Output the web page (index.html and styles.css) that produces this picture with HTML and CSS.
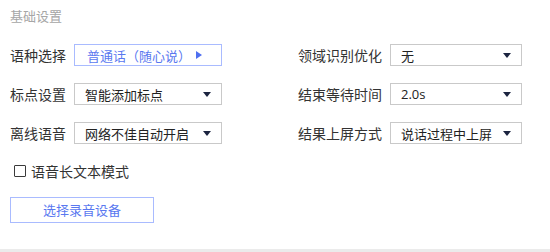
FILE: index.html
```html
<!DOCTYPE html>
<html lang="zh">
<head>
<meta charset="utf-8">
<link rel="stylesheet" href="styles.css">
</head>
<body>
<div class="panel">
  <div class="title">基础设置</div>
  <div class="grid">
    <div class="label">语种选择</div>
    <div class="select select-blue"><span>普通话（随心说）</span><i class="tri-right"></i></div>
    <div class="spacer"></div>
    <div class="label">领域识别优化</div>
    <div class="select"><span>无</span><i class="tri-down"></i></div>

    <div class="label">标点设置</div>
    <div class="select"><span>智能添加标点</span><i class="tri-down"></i></div>
    <div class="spacer"></div>
    <div class="label">结束等待时间</div>
    <div class="select"><span class="latin">2.0s</span><i class="tri-down"></i></div>

    <div class="label">离线语音</div>
    <div class="select"><span>网络不佳自动开启</span><i class="tri-down"></i></div>
    <div class="spacer"></div>
    <div class="label">结果上屏方式</div>
    <div class="select"><span>说话过程中上屏</span><i class="tri-down"></i></div>
  </div>
  <label class="check"><span class="box"></span><span>语音长文本模式</span></label>
  <div class="btn">选择录音设备</div>
</div>
<div class="bottom-line"></div>
</body>
</html>
```

FILE: styles.css
```css
html, body {
  margin: 0;
  padding: 0;
  background: #ffffff;
  width: 550px;
  height: 252px;
  overflow: hidden;
}
body {
  font-family: "Noto Sans CJK SC", "Noto Sans", sans-serif;
  color: #333333;
}
.panel {
  box-sizing: border-box;
  padding: 8px 10px 0 10px;
  height: 249px;
}
.title {
  font-size: 13px;
  line-height: 16px;
  color: #a6a6a6;
}
.grid {
  margin-top: 20px;
  display: grid;
  grid-template-columns: 64px 148px 76px 92px 132px;
  grid-auto-rows: 22px;
  row-gap: 17px;
  align-items: center;
}
.label {
  font-size: 14px;
  line-height: 22px;
  color: #333333;
  white-space: nowrap;
}
.select {
  box-sizing: border-box;
  height: 22px;
  border: 1px solid #c9c9c9;
  display: flex;
  align-items: center;
  justify-content: space-between;
  padding: 0 10px 0 10px;
  font-size: 13px;
  color: #222222;
  white-space: nowrap;
}
.latin {
  font-family: "Open Sans", "Noto Sans", sans-serif;
  font-size: 13px;
}
.select-blue {
  border-color: #a9bbff;
  color: #5a78f0;
  padding-left: 12px;
  padding-right: 19px;
}
.tri-down {
  width: 0;
  height: 0;
  border-left: 4px solid transparent;
  border-right: 4px solid transparent;
  border-top: 5px solid #1c2440;
}
.tri-right {
  width: 0;
  height: 0;
  border-top: 4px solid transparent;
  border-bottom: 4px solid transparent;
  border-left: 6px solid #4f6ff0;
}
.check {
  display: flex;
  align-items: center;
  gap: 5px;
  margin-top: 18px;
  margin-left: 4px;
  font-size: 14px;
  line-height: 18px;
  color: #333333;
}
.box {
  box-sizing: border-box;
  width: 12px;
  height: 12px;
  border: 1.5px solid #3a3a3a;
  border-radius: 1px;
}
.btn {
  box-sizing: border-box;
  margin-top: 17px;
  width: 144px;
  height: 26px;
  border: 1px solid #a9bbff;
  color: #5a78f0;
  font-size: 13px;
  line-height: 24px;
  text-align: center;
}
.bottom-line {
  height: 3px;
  background: #ebebeb;
}
```
